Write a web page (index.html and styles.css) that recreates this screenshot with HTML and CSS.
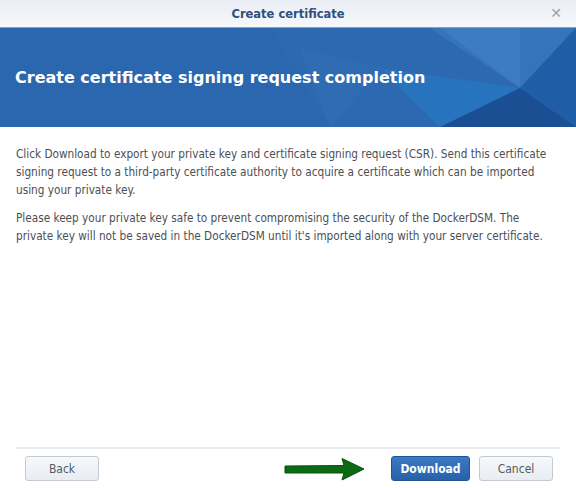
FILE: index.html
```html
<!DOCTYPE html>
<html lang="en">
<head>
  <meta charset="UTF-8">
  <title>Create certificate</title>
  <link rel="stylesheet" href="styles.css">
</head>
<body>
  <div class="dialog">
    <div class="titlebar">
      <span class="title">Create certificate</span>
      <span class="close">&#x2715;</span>
    </div>

    <div class="banner">
      <svg class="facets" width="576" height="99" viewBox="0 0 576 99" preserveAspectRatio="none">
        <polygon points="270,0 576,0 576,99 330,99" fill="#2d69b0"/>
        <polygon points="430,0 576,0 520,60" fill="#3a7cc0" opacity="0.6"/>
        <polygon points="520,60 576,0 576,99" fill="#1f5ea6"/>
        <polygon points="380,40 520,60 440,99" fill="#2778c4" opacity="0.7"/>
        <polygon points="520,60 576,99 440,99" fill="#1b4f93"/>
        <polygon points="300,20 380,40 330,99" fill="#3170b6" opacity="0.5"/>
        <polygon points="440,0 520,0 520,60" fill="#4a8acb" opacity="0.4"/>
      </svg>
      <h1>Create certificate signing request completion</h1>
    </div>

    <div class="content">
      <p>Click Download to export your private key and certificate signing request (CSR). Send this certificate signing request to a third-party certificate authority to acquire a certificate which can be imported using your private key.</p>
      <p>Please keep your private key safe to prevent compromising the security of the DockerDSM. The private key will not be saved in the DockerDSM until it's imported along with your server certificate.</p>
    </div>

    <div class="footer">
      <button class="btn">Back</button>
      <div class="right">
        <svg class="arrow" width="84" height="24" viewBox="0 0 84 24">
          <path d="M3 9 L62 8.5 L60 1.5 L82 12 L60 23 L62 16 L3 16 Z" fill="#0d6a12" stroke="#09520d" stroke-width="1" stroke-linejoin="round"/>
        </svg>
        <button class="btn primary">Download</button>
        <button class="btn">Cancel</button>
      </div>
    </div>
  </div>
</body>
</html>
```

FILE: styles.css
```css
body {
  margin: 0;
  background: #ffffff;
  font-family: "DejaVu Sans", Verdana, sans-serif;
}

.dialog {
  width: 576px;
  height: 488px;
  display: flex;
  flex-direction: column;
}

.titlebar {
  height: 27px;
  border-bottom: 1px solid #7fa3cf;
  background: linear-gradient(#e9eef4, #f6f8fb);
  display: flex;
  align-items: center;
  justify-content: center;
  position: relative;
}

.title {
  font-size: 11.5px;
  font-weight: bold;
  color: #2f4f7c;
}

.close {
  position: absolute;
  right: 14px;
  top: 5px;
  font-size: 14px;
  color: #9aa3ad;
}

.banner {
  height: 99px;
  background: #2b67ae;
  position: relative;
  display: flex;
  align-items: center;
  overflow: hidden;
}

.facets {
  position: absolute;
  left: 0;
  top: 0;
}

.banner h1 {
  position: relative;
  margin: 0 0 0 15px;
  font-size: 16px;
  font-weight: bold;
  color: #ffffff;
}

.content {
  flex: 1;
  padding: 18px 18px 0 16px;
}

.content p {
  margin: 0 0 10px;
  font-family: "DejaVu Sans Condensed", "DejaVu Sans", sans-serif;
  font-size: 11.7px;
  line-height: 18px;
  color: #4b4f55;
}

.footer {
  margin: 0 16px;
  border-top: 2px solid #e9ebee;
  padding: 7px 7px 7px 9px;
  display: flex;
  justify-content: space-between;
  align-items: center;
}

.right {
  display: flex;
  align-items: center;
}

.arrow {
  margin-right: 25px;
}

.btn {
  height: 25px;
  width: 74px;
  border: 1px solid #c3cad3;
  border-radius: 3px;
  background: linear-gradient(#f6f8fa, #e8edf2);
  font-family: "DejaVu Sans Condensed", "DejaVu Sans", sans-serif;
  font-size: 12px;
  color: #555a60;
  padding: 0;
}

.btn.primary {
  width: 79px;
  margin-right: 9px;
  border-color: #205497;
  background: linear-gradient(#3a7ac4, #2761a8);
  color: #ffffff;
  font-weight: bold;
}
```
